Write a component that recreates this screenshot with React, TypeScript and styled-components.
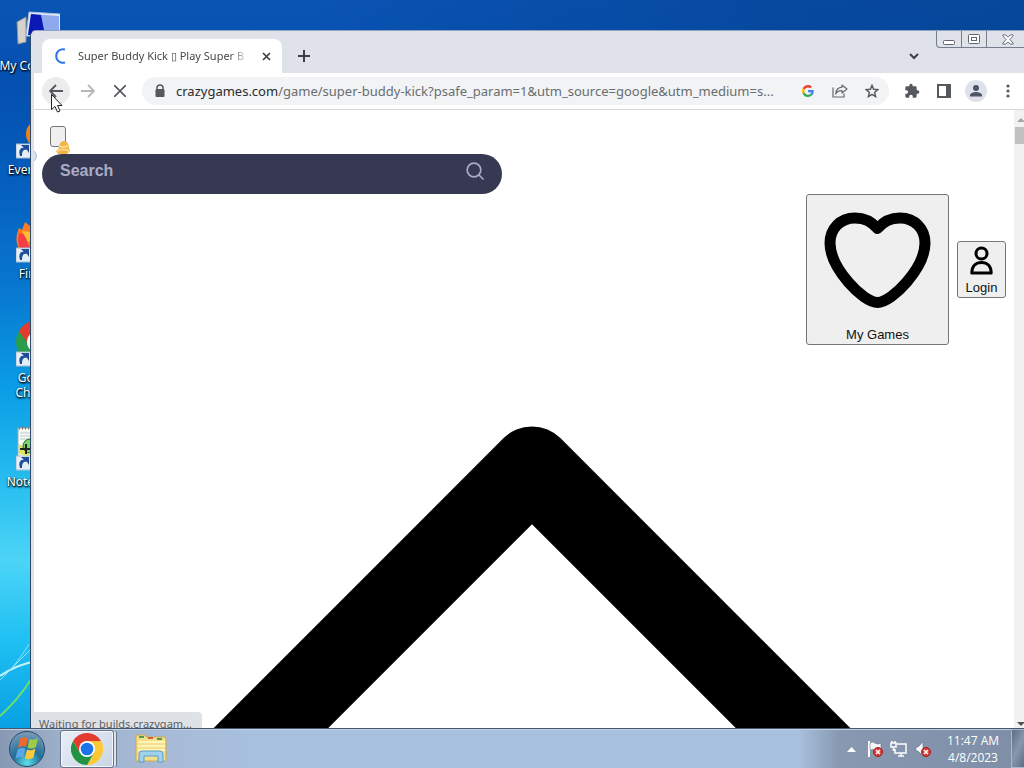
import React from "react";
import styled, { createGlobalStyle } from "styled-components";

const Global = createGlobalStyle`
  * { box-sizing: border-box; }
  body { margin: 0; overflow: hidden; font-family: "Noto Sans", sans-serif; }
  button, input { font: inherit; }
  svg { display: block; flex: none; }
`;

const Screen = styled.div`
  display: flex;
  flex-direction: column;
  height: 100vh;
`;

const Desktop = styled.main`
  position: relative;
  flex: 1;
  min-height: 0;
  overflow: hidden;
  background:
    linear-gradient(to right, transparent 30%, #043f8c80 75%, #043f8ca0) 0 0 / 100% 32px no-repeat,
    linear-gradient(#0a54b4 0, #0450b0 90px, #0560bf 190px, #0878d0 290px, #0a9ee6 390px, #2ac0f0 490px, #4cd4f6 560px, #1fc0f3 640px, #08a0e2 728px);
`;

const Shortcuts = styled.div`
  display: flex;
  flex-direction: column;
  width: 76px;
  padding-top: 8px;
`;

const Shortcut = styled.a`
  display: flex;
  flex-direction: column;
  align-items: center;
  height: 104px;
  gap: 2px;
  color: #fff;
  font-size: 12px;
  line-height: 15px;
  text-align: center;
  text-decoration: none;
  text-shadow: 0 1px 2px #000, 1px 1px 2px #000;
  white-space: nowrap;
`;

const Ribbons = styled.svg`
  position: absolute;
  left: 0;
  bottom: 0;
`;

const Window = styled.section`
  position: absolute;
  inset: 30px 0 0 30px;
  display: flex;
  flex-direction: column;
  border-left: 1px solid #2f4a68;
  border-top: 1px solid #8fa3c0;
  border-top-left-radius: 6px;
  background: #dee1e6;
  overflow: hidden;
`;

const TitleBar = styled.header`
  display: flex;
  align-items: flex-start;
  height: 42px;
  padding-left: 11px;
  background: #dfe2e9;
`;

const Tab = styled.div`
  display: flex;
  align-items: center;
  width: 240px;
  height: 34px;
  margin-top: 8px;
  padding: 0 8px 0 12px;
  gap: 12px;
  border-radius: 8px 8px 0 0;
  background: #fff;
`;

const TabTitle = styled.span`
  flex: 1;
  margin-right: -4px;
  overflow: hidden;
  color: #45494d;
  font-size: 11px;
  line-height: 16px;
  white-space: nowrap;
  mask-image: linear-gradient(to right, #000 88%, transparent);
`;

const IconButton = styled.button<{ $w?: number; $h?: number; $bg?: string }>`
  display: flex;
  flex: none;
  align-items: center;
  justify-content: center;
  width: ${(p) => p.$w ?? 28}px;
  height: ${(p) => p.$h ?? 28}px;
  padding: 0;
  border: 0;
  border-radius: 14px;
  background: ${(p) => p.$bg ?? "transparent"};
`;

const NewTab = styled(IconButton)`
  margin: 11px auto 0 8px;
`;

const TabSearch = styled(IconButton)`
  margin: 11px 8px 0 0;
`;

const Caption = styled.div`
  display: flex;
  height: 17px;
  border: 1px solid #767d8a;
  border-width: 0 0 1px 1px;
  border-bottom-left-radius: 4px;
`;

const CaptionButton = styled(IconButton)`
  border-radius: 0;
  & + & { border-left: 1px solid #767d8a; }
  &:last-child { padding-left: 4px; }
`;

const Toolbar = styled.div`
  display: flex;
  flex: none;
  align-items: center;
  height: 37px;
  margin-left: 3px;
  padding: 0 2px 0 8px;
  gap: 4px;
  border-bottom: 1px solid #d3d6da;
  background: #fff;
`;

const AddressBar = styled.div`
  display: flex;
  flex: 1;
  align-items: center;
  min-width: 0;
  height: 28px;
  margin: 0 5px 0 4px;
  padding: 0 3px 0 12px;
  border-radius: 14px;
  background: #f1f3f4;
`;

const Address = styled.div`
  flex: 1;
  min-width: 0;
  margin-left: 10px;
  overflow: hidden;
  color: #6a6d71;
  font-size: 13px;
  line-height: 20px;
  white-space: nowrap;
`;

const Host = styled.span`
  color: #2a2c2f;
`;

const AddressIcons = styled.div`
  display: flex;
  gap: 4px;
`;

const Viewport = styled.div`
  position: relative;
  display: flex;
  flex: 1;
  min-height: 0;
  margin-left: 3px;
  background: #fff;
`;

const Page = styled.div`
  flex: 1;
  min-width: 0;
  padding: 16px 8px 0;
  overflow: hidden;
`;

const MenuButton = styled.button`
  display: block;
  width: 16px;
  height: 21px;
  margin-left: 8px;
  padding: 0;
  border: 1px solid #767676;
  border-radius: 3px;
  background: #efefef;
`;

const Search = styled.label`
  display: flex;
  align-items: flex-start;
  width: 460px;
  height: 40px;
  margin-top: 7px;
  padding: 8px 18px;
  border-radius: 20px;
  background: #373952;
`;

const SearchInput = styled.input`
  flex: 1;
  min-width: 0;
  padding: 0;
  border: 0;
  outline: 0;
  background: transparent;
  font: bold 16px/18px "Liberation Sans", sans-serif;
  &::placeholder { color: #aaacc6; opacity: 1; }
`;

const Account = styled.div`
  display: flex;
  align-items: center;
  justify-content: flex-end;
  gap: 8px;
`;

const AccountButton = styled.button`
  padding: 2px 6px 0;
  border: 1px solid #767676;
  border-radius: 3px;
  background: #efefef;
  color: #111;
  && { font: 13px/18px "Liberation Sans", sans-serif; }
  svg { margin: 0 auto; }
`;

const BigChevron = styled.svg`
  width: 100%;
  height: 964px;
`;

const Scrollbar = styled.div`
  display: flex;
  flex: none;
  flex-direction: column;
  align-items: flex-end;
  justify-content: space-between;
  width: 10px;
  padding: 8px 0 2px;
  background: #f1f1f1;
`;

const Thumb = styled.div`
  width: 9px;
  height: 17px;
  margin: 5px 0 auto;
  background: #c1c1c1;
`;

const Status = styled.div`
  position: absolute;
  left: 0;
  bottom: 0;
  width: 168px;
  height: 16px;
  padding: 3px 5px 0;
  border-top-right-radius: 4px;
  background: #dee1e6;
  color: #5c6065;
  font-size: 11px;
  line-height: 17px;
  white-space: nowrap;
`;

const Overlay = styled.svg<{ $x: number; $y: number }>`
  position: absolute;
  left: ${(p) => p.$x}px;
  top: ${(p) => p.$y}px;
  pointer-events: none;
`;

const Taskbar = styled.footer`
  display: flex;
  align-items: center;
  height: 40px;
  border-top: 1px solid #46566c;
  box-shadow: inset 0 1px 0 #c3d0e2;
  background: linear-gradient(to right, #8798b2 0, #9dafc9 60px, #a7bbd8 170px, #a7c0de 250px, #a7c0de 78%, #8798b0 82%, #7d8ea6 100%);
`;

const Start = styled(IconButton)`
  margin: 0 14px 0 8px;
  border-radius: 19px;
`;

const Task = styled(IconButton)<{ $active?: boolean }>`
  margin-right: 10px;
  border-radius: 3px;
  border: 1px solid ${(p) => (p.$active ? "#64758c" : "transparent")};
  background: ${(p) => (p.$active ? "linear-gradient(135deg, #e9eef5, #c9d5e5)" : "transparent")};
  box-shadow: ${(p) => (p.$active ? "inset 0 0 0 1px #f4f7fb, 3px 0 0 -1px #dbe4f0, 4px 0 0 -1px #64758c" : "none")};
`;

const Tray = styled.div`
  display: flex;
  align-items: center;
  margin-left: auto;
  gap: 6px;
`;

const TrayArrow = styled.svg`
  margin: 2px 4px 0 0;
`;

const Clock = styled.time`
  width: 64px;
  margin-left: 3px;
  color: #fff;
  font-family: "Open Sans", sans-serif;
  font-size: 12px;
  line-height: 17px;
  text-align: center;
  white-space: nowrap;
`;

const ShowDesktop = styled.button`
  align-self: stretch;
  width: 13px;
  height: 39px;
  padding: 0;
  border: 1px solid #aab8ca;
  border-right: 0;
  background: linear-gradient(115deg, #5d6d82, #8798ad 50%, #5d6d82);
`;

const ShortcutArrow = () => (
  <g>
    <path d="M0 32h16v14H0z" fill="#e4eef8" stroke="#a9bccf" />
    <path d="M4 44c-2-6 1-9 4-8l-3-3h8v8l-2-3c-4-1-5 2-5 6z" fill="#1f4f95" />
  </g>
);

const ChromeLogo = ({ size }: { size: number }) => (
  <svg width={size} height={size} viewBox="0 0 48 48">
    <path d="M24 12h20.800A24 24 0 0 1 24 48l10.400-18z" fill="#fcc934" />
    <path d="M13.600 30L3.200 12A24 24 0 0 0 24 48l10.400-18z" fill="#229342" />
    <path d="M3.200 12A24 24 0 0 1 44.800 12H24L13.600 30z" fill="#e33b2e" />
    <circle cx="24" cy="24" r="12" fill="#fff" />
    <circle cx="24" cy="24" r="9.500" fill="#1a73e8" />
  </svg>
);

const RedCross = ({ x, y }: { x: number; y: number }) => (
  <g transform={`translate(${x} ${y})`}>
    <circle r="4.500" fill="#d83a34" stroke="#a51c1c" />
    <path d="M-2-2l4 4M2-2l-4 4" stroke="#fff" strokeWidth="1.500" />
  </g>
);

export default function App() {
  return (
    <Screen>
      <Global />
      <Desktop>
        <Ribbons width="32" height="90" viewBox="0 0 32 90" fill="none">
          <path d="M0 38Q14 28 32 24" stroke="#c9f3fc" strokeWidth="2" />
          <path d="M0 42Q16 28 29 6M4 38Q20 22 32 10" stroke="#8fe2f8" />
          <path d="M0 78Q18 62 32 40" stroke="#6fe06a" strokeWidth="2" />
        </Ribbons>
        <Shortcuts>
          <Shortcut href="#computer">
            <svg width="44" height="48" viewBox="0 0 44 48">
              <path d="M1 14l9-5v25l-8 2z" fill="#d4d2ca" stroke="#8d8f90" />
              <path d="M13 4l32 2v22H10z" fill="#dde8fa" stroke="#a9bcdc" />
              <path d="M15 6l28 2v18H12z" fill="#8fa9ee" />
              <path d="M15 6l10 1 4 20H12z" fill="#0a18b4" />
            </svg>
            My Computer
          </Shortcut>
          <Shortcut href="#everything">
            <svg width="44" height="48" viewBox="0 0 44 48">
              <circle cx="24" cy="22" r="14" fill="#f08019" />
              <ShortcutArrow />
            </svg>
            Everything
          </Shortcut>
          <Shortcut href="#firefox">
            <svg width="44" height="48" viewBox="0 0 44 48">
              <path d="M3 12l3 2 3-8 5 4q14-6 28 4v18q-12 14-26 12-22-12-13-32z" fill="#ff7b22" />
              <path d="M3 17q-4 16 10 24l4-8q-8-4-6-14z" fill="#f43d46" />
              <path d="M6 15l9 1 6 6-9 4z" fill="#ffbd30" />
              <ShortcutArrow />
            </svg>
            Firefox
          </Shortcut>
          <Shortcut href="#chrome">
            <svg width="44" height="48" viewBox="0 0 44 48">
              <circle cx="22" cy="22" r="22" fill="#2a9c4b" />
              <path d="M3 11a22 22 0 0 1 38 0H22l-9 14z" fill="#e33b2e" />
              <circle cx="22" cy="22" r="11" fill="#fff" />
              <ShortcutArrow />
            </svg>
            <span>Google<br />Chrome</span>
          </Shortcut>
          <Shortcut href="#notepad">
            <svg width="44" height="48" viewBox="0 0 44 48">
              <path d="M2 4h38v40H2z" fill="#f8faf4" stroke="#a4a8a0" />
              <path d="M3 4h36" stroke="#777" strokeWidth="3" strokeDasharray="1 2" />
              <path d="M4 9h34M4 12h34M4 15h34" stroke="#bac6d4" />
              <path d="M3 30V20l10 6v6z" fill="#e0e85a" />
              <circle cx="14" cy="22" r="7" fill="#78d66a" stroke="#246b24" />
              <path d="M4 25h12M10 20v10" stroke="#222" strokeWidth="2" />
              <ShortcutArrow />
            </svg>
            Notepad++
          </Shortcut>
        </Shortcuts>

        <Window>
          <TitleBar>
            <Tab>
              <svg width="12" height="16" viewBox="0 0 12 16" fill="none">
                <path d="M11 1.500A6.800 6.800 0 1 0 11 14.500" stroke="#2b78e4" strokeWidth="2" />
              </svg>
              <TabTitle>Super Buddy Kick ▯ Play Super B</TabTitle>
              <IconButton $w={16} $h={16} aria-label="Close tab">
                <svg width="9" height="9" viewBox="0 0 9 9"><path d="M1 1l7 7M8 1L1 8" stroke="#3c4043" strokeWidth="1.700" /></svg>
              </IconButton>
            </Tab>
            <NewTab aria-label="New tab">
              <svg width="12" height="12" viewBox="0 0 12 12"><path d="M6 0v12M0 6h12" stroke="#3c4043" strokeWidth="2" /></svg>
            </NewTab>
            <TabSearch aria-label="Search tabs">
              <svg width="10" height="7" viewBox="0 0 10 7" fill="none"><path d="M1 1l4 4 4-4" stroke="#3c4043" strokeWidth="2" /></svg>
            </TabSearch>
            <Caption>
              <CaptionButton $w={24} $h={16} aria-label="Minimize">
                <svg width="12" height="13" viewBox="0 0 12 13"><rect x=".5" y="7.500" width="11" height="4" rx="1" fill="#fff" stroke="#60656f" /></svg>
              </CaptionButton>
              <CaptionButton $w={25} $h={16} aria-label="Restore">
                <svg width="12" height="10" viewBox="0 0 12 10"><rect x=".5" y=".5" width="11" height="9" rx="1" fill="#fff" stroke="#60656f" /><rect x="3.500" y="3.500" width="5" height="3" fill="#fff" stroke="#60656f" /></svg>
              </CaptionButton>
              <CaptionButton $w={38} $h={16} aria-label="Close">
                <svg width="12" height="11" viewBox="0 0 13 11"><path d="M1 .5h3l2.500 2.500L9 .5h3v1L8.500 5.500 12 9.500v1H9L6.500 8 4 10.500H1v-1l3.500-4L1 1.500z" fill="#fff" stroke="#60656f" /></svg>
              </CaptionButton>
            </Caption>
          </TitleBar>

          <Toolbar>
            <IconButton $bg="#ececed" aria-label="Back">
              <svg width="14" height="14" viewBox="0 0 14 14" fill="none"><path d="M14 7H1M7 1L1 7l6 6" stroke="#55585c" strokeWidth="1.800" /></svg>
            </IconButton>
            <IconButton aria-label="Forward">
              <svg width="14" height="14" viewBox="0 0 14 14" fill="none"><path d="M0 7h13M7 1l6 6-6 6" stroke="#b5b7ba" strokeWidth="1.800" /></svg>
            </IconButton>
            <IconButton aria-label="Stop">
              <svg width="12" height="12" viewBox="0 0 12 12"><path d="M0 0l12 12M12 0L0 12" stroke="#55585c" strokeWidth="1.700" /></svg>
            </IconButton>
            <AddressBar>
              <svg width="12" height="14" viewBox="0 0 12 14"><path d="M3 6V4a3 3 0 0 1 6 0v2" fill="none" stroke="#55585c" strokeWidth="1.500" /><rect x="1.500" y="5" width="9" height="8" rx="1" fill="#55585c" /></svg>
              <Address><Host>crazygames.com</Host>/game/super-buddy-kick?psafe_param=1&amp;utm_source=google&amp;utm_medium=s...</Address>
              <AddressIcons>
                <IconButton aria-label="Search with Google">
                  <svg width="12" height="12" viewBox="0 0 48 48">
                    <path fill="#ea4335" d="M24 9.500c3.500 0 6.700 1.200 9.200 3.600l6.900-6.900C35.900 2.400 30.500 0 24 0 14.600 0 6.500 5.400 2.600 13.200l8 6.200C12.400 13.700 17.700 9.500 24 9.500z" />
                    <path fill="#4285f4" d="M47 24.600c0-1.600-.2-3.100-.4-4.600H24v9h12.900c-.6 3-2.200 5.500-4.700 7.200l7.700 6C44.400 38 47 31.800 47 24.600z" />
                    <path fill="#fbbc05" d="M10.500 28.600a14.500 14.500 0 0 1 0-9.200l-8-6.200a24 24 0 0 0 0 21.600z" />
                    <path fill="#34a853" d="M24 48c6.500 0 11.900-2.100 15.900-5.800l-7.700-6c-2.200 1.500-4.900 2.300-8.200 2.300-6.300 0-11.600-4.200-13.500-9.900l-8 6.200C6.500 42.600 14.600 48 24 48z" />
                  </svg>
                </IconButton>
                <IconButton aria-label="Share">
                  <svg width="16" height="14" viewBox="0 0 16 14" fill="none" stroke="#66696d" strokeWidth="1.200"><path d="M1 3.500v9.500h11V9.500" /><path d="M10 1l5 4-5 4V6.700C7 6.500 5 7.500 3.700 10 4 6 6 3.500 10 3.200z" strokeLinejoin="round" /></svg>
                </IconButton>
                <IconButton aria-label="Bookmark">
                  <svg width="14" height="14" viewBox="0 0 14 14" fill="none"><path d="M7 1.300l1.600 4 4.200.3-3.200 2.800 1 4.200L7 10.300l-3.600 2.300 1-4.200L1.200 5.600l4.200-.3z" stroke="#55585c" strokeWidth="1.400" /></svg>
                </IconButton>
              </AddressIcons>
            </AddressBar>
            <IconButton aria-label="Extensions">
              <svg width="16" height="16" viewBox="0 0 24 24" fill="#55585c"><path d="M20.500 11H19V7a2 2 0 0 0-2-2h-4V3.500a2.500 2.500 0 0 0-5 0V5H4a2 2 0 0 0-2 2v3.800h1.500a2.700 2.700 0 0 1 0 5.400H2V20c0 1.100.9 2 2 2h3.800v-1.500a2.700 2.700 0 0 1 5.400 0V22H17a2 2 0 0 0 2-2v-4h1.500a2.500 2.500 0 0 0 0-5z" /></svg>
            </IconButton>
            <IconButton aria-label="Side panel">
              <svg width="14" height="14" viewBox="0 0 14 14"><path d="M1 1h12v12H1z" fill="#fff" stroke="#55585c" strokeWidth="2" /><path d="M9 1h4v12H9z" fill="#55585c" /></svg>
            </IconButton>
            <IconButton aria-label="Profile">
              <svg width="22" height="22" viewBox="0 0 22 22"><circle cx="11" cy="11" r="11" fill="#dfe2ea" /><circle cx="11" cy="8" r="3" fill="#4b5563" /><path d="M5 16.500v-1.500c0-2 4-3 6-3s6 1 6 3v1.500z" fill="#4b5563" /></svg>
            </IconButton>
            <IconButton aria-label="Menu">
              <svg width="4" height="14" viewBox="0 0 4 14" fill="#55585c"><circle cx="2" cy="2" r="1.600" /><circle cx="2" cy="7" r="1.600" /><circle cx="2" cy="12" r="1.600" /></svg>
            </IconButton>
          </Toolbar>

          <Viewport>
            <Page>
              <MenuButton aria-label="Open menu" />
              <Search>
                <SearchInput placeholder="Search" aria-label="Search" />
                <svg width="18" height="18" viewBox="0 0 18 18" fill="none" stroke="#aaacc6" strokeWidth="1.700" strokeLinecap="round"><circle cx="8" cy="8" r="6.800" /><path d="M13 13l4 4" /></svg>
              </Search>
              <Account>
                <AccountButton>
                  <svg width="129" height="129" viewBox="813 197 129 129" fill="none" stroke="#000" strokeWidth="11" strokeLinecap="round" strokeLinejoin="round">
                    <path d="M877.500 228.500C871 221 865 218 855 218C840 218 830 229 830 243C830 268 863 302.500 877.500 302.500C892 302.500 925 268 925 243C925 229 915 218 900 218C890 218 884 221 877.500 228.500Z" />
                  </svg>
                  My Games
                </AccountButton>
                <AccountButton>
                  <svg width="35" height="35" viewBox="964 244 35 35" fill="none" stroke="#000" strokeWidth="3" strokeLinejoin="round"><circle cx="981.500" cy="253.500" r="5.500" /><path d="M971.800 273C971.800 266 976 262.500 981.500 262.500S991.200 266 991.200 273Z" /></svg>
                  Login
                </AccountButton>
              </Account>
              <BigChevron viewBox="0 0 964 964" fill="none">
                <path d="M90 522L490 122L890 522" stroke="#000" strokeWidth="81" strokeLinecap="round" strokeLinejoin="round" />
              </BigChevron>
            </Page>
            <Scrollbar>
              <svg width="7" height="4" viewBox="0 0 7 4"><path d="M0 4l4-4 3 3v1z" fill="#a3a3a3" /></svg>
              <Thumb />
              <svg width="7" height="4" viewBox="0 0 7 4"><path d="M0 0l4 4 3-3V0z" fill="#505050" /></svg>
            </Scrollbar>
            <Overlay $x={21} $y={30} width="16" height="14" viewBox="0 0 16 14">
              <path d="M1 11l3-3C4 4 6 1 9 1s5 3 5 7l1 3-3 3H3z" fill="#f3b545" />
              <path d="M4 6q4 2 9 0M2 11q6-3 12 0" stroke="#ffe09a" strokeWidth="1.500" fill="none" />
            </Overlay>
            <Overlay $x={0} $y={40} width="4" height="12" viewBox="0 0 4 12"><path d="M0 1q5 5 0 10" fill="#d6e4f0" stroke="#a5bdd3" /></Overlay>
            <Status>Waiting for builds.crazygam...</Status>
          </Viewport>
        </Window>

        <Overlay $x={50} $y={93} width="14" height="21" viewBox="0 0 14 21">
          <path d="M1.500 1.500v15l3.500-3 2.500 5.500 2.500-1-2.500-5.500h4.500z" fill="#fff" stroke="#222" />
        </Overlay>
      </Desktop>

      <Taskbar>
        <Start $w={38} $h={38} aria-label="Start">
          <svg width="36" height="36" viewBox="0 0 36 36">
            <defs>
              <radialGradient id="orb" cx=".5" cy=".9" r=".9"><stop offset="0" stopColor="#5fe0ea" /><stop offset=".45" stopColor="#1f719c" /><stop offset="1" stopColor="#7f9db8" /></radialGradient>
            </defs>
            <circle cx="18" cy="18" r="17.500" fill="url(#orb)" stroke="#2c4a66" />
            <path d="M11 8q4-3 8-1l-2 9q-4-2-8 1z" fill="#ee6a2c" />
            <path d="M20.500 8q4 2 8.500-1l-2 9q-4 3-8.500 1z" fill="#9dcc45" />
            <path d="M8.500 18.500q4-3 8-1l-2 9q-4-2-8 1z" fill="#5aa6e8" />
            <path d="M18 18.500q4 2 8.500-1l-2 9q-4 3-8.500 1z" fill="#fbc93b" />
          </svg>
        </Start>
        <Task $w={54} $h={38} $active aria-label="Google Chrome"><ChromeLogo size={32} /></Task>
        <Task $w={54} $h={38} aria-label="File Explorer">
          <svg width="32" height="30" viewBox="0 0 32 30">
            <path d="M1 3l1-2h8l1 2h19l1 2v22H1z" fill="#f4df8c" stroke="#c9a94c" />
            <path d="M4 3h5M22 5h5" stroke="#4e9a55" strokeWidth="2" />
            <path d="M13 4h5" stroke="#d2603a" strokeWidth="2" />
            <path d="M3 8h27M3 12h27M3 16h27" stroke="#fff3b8" strokeWidth="2" />
            <path d="M4 28v-8q0-3 3-3h18q3 0 3 3v8h-5v-6H9v6z" fill="#9fd2ee" stroke="#5a9dc4" />
          </svg>
        </Task>
        <Tray>
          <TrayArrow width="9" height="5" viewBox="0 0 9 5"><path d="M0 5l4.500-5L9 5z" fill="#fff" /></TrayArrow>
          <svg width="18" height="18" viewBox="0 0 18 18"><path d="M3 1v16" stroke="#fff" strokeWidth="2" /><path d="M4 3q3-2 5 0t6 0v7q-3 1-5 0t-6 0z" fill="#f5f8fb" stroke="#506070" strokeWidth=".5" /><RedCross x={12} y={12} /></svg>
          <svg width="18" height="18" viewBox="0 0 18 18" fill="none" stroke="#fff" strokeWidth="1.500"><path d="M7 4h9v9H5V9M8 16h6M11 13v3M1 3h5v4H1zM3.500 7v4M2 1v2M5 1v2" /></svg>
          <svg width="18" height="18" viewBox="0 0 18 18"><path d="M2 7h2l5-5v14l-5-5H2z" fill="#f5f8fb" stroke="#506070" strokeWidth=".5" /><RedCross x={12} y={12} /></svg>
          <Clock>11:47 AM<br />4/8/2023</Clock>
          <ShowDesktop aria-label="Show desktop" />
        </Tray>
      </Taskbar>
    </Screen>
  );
}
